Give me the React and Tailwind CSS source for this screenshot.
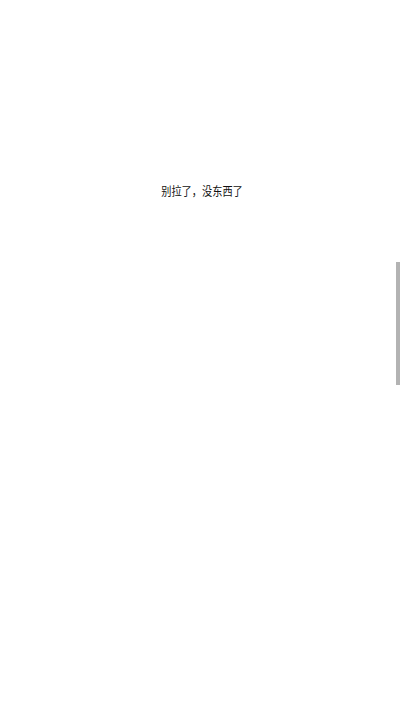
export default function App() {
  return (
    <div className="relative h-[711px] w-full overflow-hidden bg-white">
      <div className="pt-[183px] pl-[5px] text-center text-[12px] leading-4 text-[#111] font-['Noto_Sans_CJK_SC',sans-serif]">
        <span className="inline-block scale-x-[0.85]">别拉了，没东西了</span>
      </div>
      <div className="absolute right-0 top-[262px] h-[123px] w-[4px] bg-[#b3b3b3]" />
    </div>
  )
}
